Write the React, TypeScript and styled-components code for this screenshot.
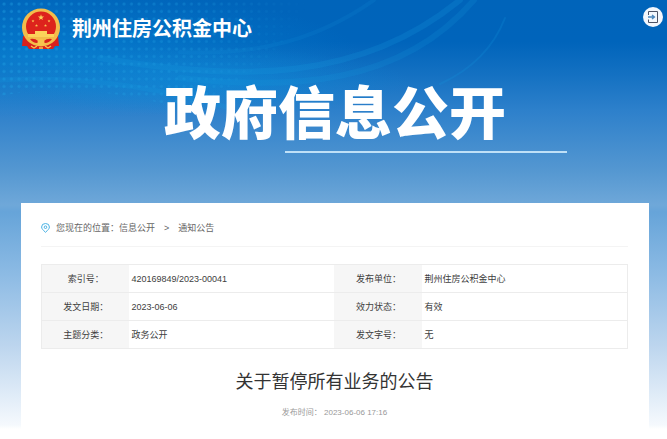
import React from "react";
import styled, { createGlobalStyle } from "styled-components";

const GlobalStyle = createGlobalStyle`
  * { box-sizing: border-box; }
  body {
    margin: 0;
    background: #fff;
    color: #404040;
    font: 9px/14px "Liberation Sans", "Noto Sans CJK SC", sans-serif;
  }
`;

const Page = styled.div`
  position: relative;
  isolation: isolate;
  padding: 0 18px 0 21px;
  background: linear-gradient(
    #0064ba 0,
    #0064bb 42px,
    #1471c2 75px,
    #2d80cb 110px,
    #5497d1 170px,
    #6fa8d9 205px,
    #66a4d9 212px,
    #8dbbe4 275px,
    #bcd5ee 345px,
    #f5f9fd 425px,
    #fff 429px
  );
`;

const Backdrop = styled.svg`
  position: absolute;
  z-index: -1;
  inset: 0;
  width: 100%;
  height: 203px;
`;

const Header = styled.header`
  display: flex;
  justify-content: space-between;
  align-items: flex-start;
  margin-right: -14px;
  padding-top: 7px;
`;

const Brand = styled.a`
  display: flex;
  align-items: center;
  gap: 11px;
  color: #fff;
  font-size: 20px;
  font-weight: 700;
  line-height: 44px;
  text-decoration: none;
`;

const ExitButton = styled.button`
  display: grid;
  place-items: center;
  width: 20px;
  height: 20px;
  padding: 0;
  border: 0;
  border-radius: 50%;
  background: #f3f7fd;
`;

const Hero = styled.div`
  display: flex;
  flex-direction: column;
  align-items: center;
  padding: 26px 0 50px;
`;

const HeroTitle = styled.h1`
  margin: 0;
  color: #fff;
  font-size: 57px;
  font-weight: 900;
  line-height: 74px;
`;

const HeroRule = styled.div`
  width: 45%;
  height: 2px;
  margin-left: 29%;
  background: #bfe0f7;
`;

const Card = styled.main`
  padding: 17px 21px 9px 20px;
  background: #fff;
`;

const Crumbs = styled.nav`
  display: flex;
  align-items: center;
  padding-bottom: 10px;
  border-bottom: 1px solid #f4f4f4;
  line-height: 16px;
  color: #666;

  svg { margin-right: 6px; }
  a { color: inherit; text-decoration: none; }
`;

const Separator = styled.span`
  margin: 0 9px;
`;

const InfoTable = styled.table`
  width: 100%;
  margin-top: 17px;
  border-collapse: collapse;
  table-layout: fixed;
  border: 1px solid #ececec;
`;

const Label = styled.th`
  width: 15%;
  height: 28px;
  padding: 0;
  border-bottom: 1px solid #ececec;
  background: #f6f6f6;
  font-weight: 400;
  text-align: center;
`;

const Value = styled.td`
  width: 35%;
  padding: 0 2px;
  border-bottom: 1px solid #ececec;
`;

const ArticleTitle = styled.h2`
  margin: 19px 0 0;
  color: #333;
  font-size: 18px;
  font-weight: 400;
  line-height: 28px;
  text-align: center;
`;

const PublishTime = styled.p`
  margin: 10px 0 0;
  color: #999;
  font-size: 8px;
  line-height: 14px;
  text-align: center;
`;

const rows = [
  ["索引号：", "420169849/2023-00041", "发布单位：", "荆州住房公积金中心"],
  ["发文日期：", "2023-06-06", "效力状态：", "有效"],
  ["主题分类：", "政务公开", "发文字号：", "无"],
];

const star = (cx: number, cy: number, r: number) =>
  Array.from({ length: 10 }, (_, i) => {
    const d = i % 2 ? r * 0.4 : r;
    const a = (Math.PI * i) / 5;
    return `${cx + d * Math.sin(a)},${cy - d * Math.cos(a)}`;
  }).join(" ");

function Emblem() {
  return (
    <svg width="40" height="42" viewBox="0 0 40 42" aria-hidden="true">
      <path d="M2 28 L1 38 L6 38 L8 41 L32 41 L34 38 L38 38 L37 28Z" fill="#d9201c" />
      <circle cx="20" cy="19.5" r="19" fill="#f3bd4b" />
      <circle cx="20" cy="18.5" r="15" fill="#dd231c" />
      <polygon points={star(20, 9.5, 3.2)} fill="#fbd25a" />
      {[[12, 13], [28, 13], [15.5, 17.5], [24.5, 17.5]].map(([x, y]) => (
        <polygon key={x} points={star(x, y, 1.6)} fill="#fbc354" />
      ))}
      <path d="M14 23 h12 v3 h7 v3 H7 v-3 h7z" fill="#fbd25a" />
      <path d="M7 29 h26 c-2 4-5 6-8 7 H15 c-3-1-6-3-8-7z" fill="#f3bd4b" />
      <path d="M9 31 Q14 30 17 33 H23 Q26 30 31 31 Q28 35 24 35 H16 Q12 35 9 31Z" fill="#d9201c" />
      <circle cx="20" cy="34.5" r="3.5" fill="#f8c44e" />
      <path d="M10 38 l3 2 3-2 M30 38 l-3 2 -3-2 M18 40 h4" fill="none" stroke="#f8c44e" strokeWidth="1.4" />
    </svg>
  );
}

function BannerArt() {
  return (
    <Backdrop viewBox="0 0 667 203" preserveAspectRatio="none" aria-hidden="true">
      <defs>
        <radialGradient id="glow">
          <stop offset="0" stopColor="#0a8ddb" stopOpacity="0.55" />
          <stop offset="1" stopColor="#0a8ddb" stopOpacity="0" />
        </radialGradient>
        <pattern id="dots" width="7.5" height="7.5" patternUnits="userSpaceOnUse">
          <circle cx="4" cy="4" r="1.6" fill="#20a0e2" />
        </pattern>
        <linearGradient id="fade" x2="1">
          <stop offset="0" stopColor="#fff" stopOpacity="0.45" />
          <stop offset="0.6" stopColor="#fff" stopOpacity="0.3" />
          <stop offset="1" stopColor="#fff" stopOpacity="0" />
        </linearGradient>
        <mask id="dotMask">
          <path d="M0 0 H310 Q270 80 180 108 Q80 80 0 96Z" fill="url(#fade)" />
        </mask>
      </defs>
      <ellipse cx="60" cy="55" rx="300" ry="65" fill="url(#glow)" />
      <ellipse cx="210" cy="82" rx="200" ry="34" fill="url(#glow)" />
      <rect width="320" height="110" fill="url(#dots)" mask="url(#dotMask)" />
      <g fill="none" stroke="#159ae0" strokeLinecap="round">
        <path d="M0 80 Q110 74 230 108" strokeWidth="5" opacity="0.2" />
        <path d="M100 58 C240 82 360 82 460 0" strokeWidth="6" opacity="0.22" />
        <path d="M180 78 C290 90 400 86 474 0" strokeWidth="6" opacity="0.18" />
        <path d="M180 52 C260 56 320 38 374 0" strokeWidth="4" opacity="0.13" />
        <path d="M505 18 Q488 62 440 84" strokeWidth="2" opacity="0.2" />
      </g>
    </Backdrop>
  );
}

export default function App() {
  return (
    <>
      <GlobalStyle />
      <Page>
        <BannerArt />
        <Header>
          <Brand href="#">
            <Emblem />
            荆州住房公积金中心
          </Brand>
          <ExitButton type="button" aria-label="退出">
            <svg width="12" height="12" viewBox="0 0 12 12" fill="none">
              <path d="M1.5 4 V.5 H10.5 V11.5 H1.5 V8.5" stroke="#4c5265" />
              <path d="M1 6 H7 M5 4 L7.5 6 L5 8" stroke="#4a86bd" strokeWidth="1.3" />
            </svg>
          </ExitButton>
        </Header>
        <Hero>
          <HeroTitle>政府信息公开</HeroTitle>
          <HeroRule />
        </Hero>
        <Card>
          <Crumbs aria-label="您现在的位置">
            <svg width="9" height="10" viewBox="0 0 9 10" fill="none" stroke="#4bb2e4" aria-hidden="true">
              <path d="M4.5 9.3 C2 7 .6 5.7 .6 4 a3.9 3.5 0 0 1 7.8 0 C8.4 5.7 7 7 4.5 9.3Z" />
              <circle cx="4.5" cy="4.2" r="1.3" />
            </svg>
            <span>您现在的位置：</span>
            <a href="#">信息公开</a>
            <Separator>&gt;</Separator>
            <a href="#">通知公告</a>
          </Crumbs>
          <InfoTable>
            <tbody>
              {rows.map(([l1, v1, l2, v2]) => (
                <tr key={l1}>
                  <Label scope="row">{l1}</Label>
                  <Value>{v1}</Value>
                  <Label scope="row">{l2}</Label>
                  <Value>{v2}</Value>
                </tr>
              ))}
            </tbody>
          </InfoTable>
          <ArticleTitle>关于暂停所有业务的公告</ArticleTitle>
          <PublishTime>发布时间： 2023-06-06 17:16</PublishTime>
        </Card>
      </Page>
    </>
  );
}
